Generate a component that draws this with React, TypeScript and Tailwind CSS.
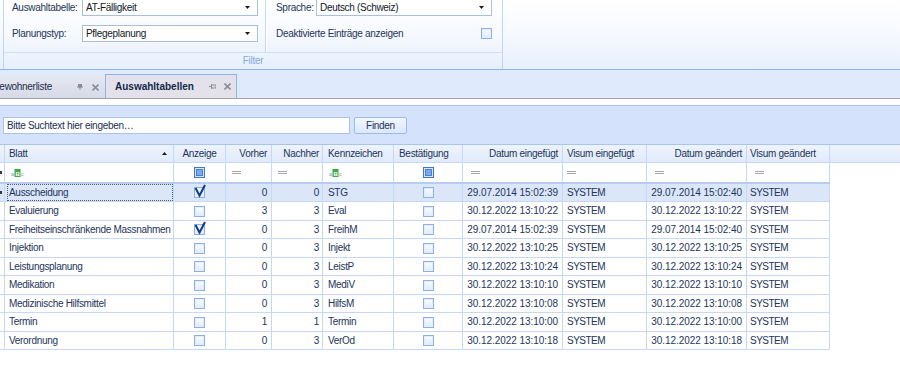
import React from 'react';

type Row = {
  blatt: string;
  anzeige: boolean;
  vorher: number;
  nachher: number;
  kz: string;
  ein: string;
  aen: string;
  h: string;
};

const rows: Row[] = [
  { blatt: 'Ausscheidung', anzeige: true, vorher: 0, nachher: 0, kz: 'STG', ein: '29.07.2014 15:02:39', aen: '29.07.2014 15:02:40', h: 'h-[18px]' },
  { blatt: 'Evaluierung', anzeige: false, vorher: 3, nachher: 3, kz: 'Eval', ein: '30.12.2022 13:10:22', aen: '30.12.2022 13:10:22', h: 'h-[19px]' },
  { blatt: 'Freiheitseinschränkende Massnahmen', anzeige: true, vorher: 0, nachher: 3, kz: 'FreihM', ein: '29.07.2014 15:02:39', aen: '29.07.2014 15:02:40', h: 'h-[18px]' },
  { blatt: 'Injektion', anzeige: false, vorher: 0, nachher: 3, kz: 'Injekt', ein: '30.12.2022 13:10:25', aen: '30.12.2022 13:10:25', h: 'h-[19px]' },
  { blatt: 'Leistungsplanung', anzeige: false, vorher: 0, nachher: 3, kz: 'LeistP', ein: '30.12.2022 13:10:24', aen: '30.12.2022 13:10:24', h: 'h-[18px]' },
  { blatt: 'Medikation', anzeige: false, vorher: 0, nachher: 3, kz: 'MediV', ein: '30.12.2022 13:10:10', aen: '30.12.2022 13:10:10', h: 'h-[19px]' },
  { blatt: 'Medizinische Hilfsmittel', anzeige: false, vorher: 0, nachher: 3, kz: 'HilfsM', ein: '30.12.2022 13:10:08', aen: '30.12.2022 13:10:08', h: 'h-[18px]' },
  { blatt: 'Termin', anzeige: false, vorher: 1, nachher: 1, kz: 'Termin', ein: '30.12.2022 13:10:00', aen: '30.12.2022 13:10:00', h: 'h-[19px]' },
  { blatt: 'Verordnung', anzeige: false, vorher: 0, nachher: 3, kz: 'VerOd', ein: '30.12.2022 13:10:18', aen: '30.12.2022 13:10:18', h: 'h-[18px]' },
];

const cell = 'flex h-full items-center overflow-hidden whitespace-nowrap border-r border-[#c5d8f5]';

const Arrow = () => (
  <svg width="5" height="3" viewBox="0 0 5 3">
    <path d="M0 0H5L2.5 3Z" fill="#1a1a1a" />
  </svg>
);

const Combo = ({ value }: { value: string }) => (
  <div className="flex h-[17px] w-[176px] items-center border border-[#a9bfdd] bg-white pl-[3px] pr-[7px]">
    <span className="flex-1 text-[#121a26]">{value}</span>
    <Arrow />
  </div>
);

const Check = ({ checked = false }: { checked?: boolean }) => (
  <div className="relative h-[11px] w-[11px] border border-[#8eb0e7] bg-white">
    <div className="h-full w-full border border-[#e3edfc] bg-gradient-to-b from-[#f7faff] to-[#e4edfb]" />
    {checked && (
      <svg className="absolute -left-px -top-[3px] overflow-visible" width="12" height="12" viewBox="0 0 12 12">
        <path d="M1.5 3 L5.5 10.5 L11 0" fill="none" stroke="#163a8c" strokeWidth="2" />
      </svg>
    )}
  </div>
);

const FilterCheck = () => (
  <div className="h-[11px] w-[11px] border border-[#3f76d0] bg-[#d8e6fc] p-px">
    <div className="h-full w-full border border-[#4a80d6] bg-[#7ea8e8]" />
  </div>
);

const AbcIcon = () => (
  <svg width="14" height="8" viewBox="0 0 14 8">
    <text x="0" y="7" fontSize="5.5" fill="#8a9a8e" fontFamily="Liberation Sans, sans-serif">a</text>
    <rect x="3.5" y="0" width="6" height="8" fill="#3daa48" />
    <text x="4.4" y="6.6" fontSize="6" fill="#ffffff" fontWeight="bold" fontFamily="Liberation Sans, sans-serif">B</text>
    <text x="10" y="7" fontSize="5.5" fill="#8a9a8e" fontFamily="Liberation Sans, sans-serif">c</text>
  </svg>
);

const EqIcon = () => (
  <div className="flex flex-col gap-px">
    <div className="h-px w-[9px] bg-[#a8a8a8]" />
    <div className="h-px w-[9px] bg-[#a8a8a8]" />
  </div>
);

const PinV = () => (
  <svg width="6" height="6" viewBox="0 0 6 6">
    <path d="M1.5 0H4.5V3H1.5Z M0 3H6 M3 3V6" fill="#8b8d9c" stroke="#8b8d9c" strokeWidth="1" />
  </svg>
);

const PinH = () => (
  <svg width="7" height="5" viewBox="0 0 7 5">
    <path d="M0 2.5H2 M2.5 0V5 M2.5 1H7V4H2.5" fill="none" stroke="#8b8d9c" strokeWidth="1" />
  </svg>
);

const Close = () => (
  <svg width="7" height="7" viewBox="0 0 7 7">
    <path d="M0.5 0.5L6.5 6.5M6.5 0.5L0.5 6.5" stroke="#8b8d9c" strokeWidth="1.6" />
  </svg>
);

const Marker = () => <div className="h-[3px] w-[2px] bg-[#2d3a4d]" />;

export default function App() {
  return (
    <div className="h-[389px] w-[900px] overflow-hidden bg-white font-['Liberation_Sans',Arial,sans-serif] text-[10px] leading-none tracking-[-0.3px] text-[#1d3559]">
      {/* ribbon */}
      <div className="flex h-[70px] border-b border-[#8fb3ea] bg-gradient-to-b from-white via-[#f6f9fe] to-[#e6effc]">
        <div className="ml-[3px] flex w-[500px] flex-col border-x border-[#c3d6f1]">
          <div className="flex h-[53px] border-b border-[#d2e0f5]">
            <div className="-mt-px flex w-[262px] flex-col gap-[9px] border-r border-[#c6d8f2] pl-[8px]">
              <div className="flex items-center">
                <span className="w-[70px]">Auswahltabelle:</span>
                <Combo value="AT-Fälligkeit" />
              </div>
              <div className="flex items-center">
                <span className="w-[70px]">Planungstyp:</span>
                <Combo value="Pflegeplanung" />
              </div>
            </div>
            <div className="-mt-px flex flex-col gap-[9px] border-l border-white pl-[9px]">
              <div className="flex items-center">
                <span className="w-[40px]">Sprache:</span>
                <Combo value="Deutsch (Schweiz)" />
              </div>
              <div className="flex h-[17px] w-[216px] items-center justify-between">
                <span>Deaktivierte Einträge anzeigen</span>
                <Check />
              </div>
            </div>
          </div>
          <div className="flex flex-1 items-center justify-center text-[#86a8dc]">Filter</div>
        </div>
      </div>

      {/* tabs */}
      <div className="flex h-[29px] items-end border-b border-[#a2a2a6] bg-[#dfeafd]">
        <div className="-ml-[15px] flex h-[22px] w-[120px] items-center bg-gradient-to-b from-[#e6e8f1] to-[#d6dae8] pl-[8px] pr-[6px] text-[#1c2c4a]">
          <span>Bewohnerliste</span>
          <div className="ml-auto flex items-center gap-[9px]">
            <PinV />
            <Close />
          </div>
        </div>
        <div className="flex h-[24px] w-[132px] items-center border-x border-t border-[#91b3e8] bg-[#e3e2eb] pl-[9px] pr-[5px] font-bold tracking-normal text-[#14284b]">
          <span>Auswahltabellen</span>
          <div className="ml-auto flex items-center gap-[8px]">
            <PinH />
            <Close />
          </div>
        </div>
      </div>

      <div className="h-[6px] bg-white" />

      {/* search */}
      <div className="flex h-[40px] items-start gap-[4px] border-y border-[#a8c4ef] bg-[#d4e3fb] pl-[3px] pt-[11px]">
        <div className="flex h-[17px] w-[347px] items-center border border-[#a9c3ea] bg-white pl-[3px] text-[#1a2f55]">
          Bitte Suchtext hier eingeben…
        </div>
        <div className="flex h-[17px] w-[53px] items-center justify-center rounded-[2px] border border-[#9dbbe8] bg-gradient-to-b from-[#f2f7fe] to-[#dbe7fa]">
          Finden
        </div>
      </div>

      {/* grid header */}
      <div className="flex h-[18px] border-b border-[#c5d8f5] bg-gradient-to-b from-[#eef4fd] to-[#e0eafb]">
        <div className={`${cell} w-[5px]`} />
        <div className={`${cell} w-[169px] justify-between pl-[4px] pr-[6px]`}>
          <span>Blatt</span>
          <svg width="5" height="3" viewBox="0 0 5 3">
            <path d="M0 3H5L2.5 0Z" fill="#1a1a1a" />
          </svg>
        </div>
        <div className={`${cell} w-[52px] justify-center`}>Anzeige</div>
        <div className={`${cell} w-[46px] justify-end pr-[4px]`}>Vorher</div>
        <div className={`${cell} w-[51px] justify-end pr-[3px]`}>Nachher</div>
        <div className={`${cell} w-[71px] pl-[5px]`}>Kennzeichen</div>
        <div className={`${cell} w-[69px] pl-[5px]`}>Bestätigung</div>
        <div className={`${cell} w-[100px] justify-end pr-[4px]`}>Datum eingefügt</div>
        <div className={`${cell} w-[84px] pl-[4px]`}>Visum eingefügt</div>
        <div className={`${cell} w-[100px] justify-end pr-[4px]`}>Datum geändert</div>
        <div className={`${cell} w-[83px] pl-[3px]`}>Visum geändert</div>
      </div>

      {/* filter row */}
      <div className="flex h-[19px] bg-white">
        <div className={`${cell} w-[5px]`}>
          <Marker />
        </div>
        <div className={`${cell} w-[169px] pl-[6px]`}>
          <AbcIcon />
        </div>
        <div className={`${cell} w-[52px] justify-center`}>
          <FilterCheck />
        </div>
        <div className={`${cell} w-[46px] pl-[6px]`}>
          <EqIcon />
        </div>
        <div className={`${cell} w-[51px] pl-[6px]`}>
          <EqIcon />
        </div>
        <div className={`${cell} w-[71px] pl-[6px]`}>
          <AbcIcon />
        </div>
        <div className={`${cell} w-[69px] justify-center`}>
          <FilterCheck />
        </div>
        <div className={`${cell} w-[100px] pl-[8px]`}>
          <EqIcon />
        </div>
        <div className={`${cell} w-[84px] pl-[4px]`}>
          <EqIcon />
        </div>
        <div className={`${cell} w-[100px] pl-[8px]`}>
          <EqIcon />
        </div>
        <div className={`${cell} w-[83px] pl-[8px]`}>
          <EqIcon />
        </div>
      </div>
      <div className="h-[2px] w-[830px] bg-[#b6cdf1]" />

      {/* data rows */}
      {rows.map((r, i) => {
        const sel = i === 0;
        return (
          <div
            key={r.blatt}
            className={`flex w-[830px] border-b border-[#c5d8f5] ${r.h} ${sel ? 'bg-[#dbe6f9]' : 'bg-white'}`}
          >
            <div className={`${cell} w-[5px]`}>{sel && <Marker />}</div>
            <div className={`${cell} w-[169px] pl-[2px]`}>
              <div
                className={`flex h-full w-full items-center pl-[2px] ${
                  sel ? 'outline-1 -outline-offset-1 outline-dotted outline-[#4d5d75]' : ''
                }`}
              >
                {r.blatt}
              </div>
            </div>
            <div className={`${cell} w-[52px] justify-center`}>
              <Check checked={r.anzeige} />
            </div>
            <div className={`${cell} w-[46px] justify-end pr-[4px]`}>{r.vorher}</div>
            <div className={`${cell} w-[51px] justify-end pr-[3px]`}>{r.nachher}</div>
            <div className={`${cell} w-[71px] pl-[5px]`}>{r.kz}</div>
            <div className={`${cell} w-[69px] justify-center`}>
              <Check />
            </div>
            <div className={`${cell} w-[100px] justify-end pr-[4px] tracking-[-0.05px]`}>{r.ein}</div>
            <div className={`${cell} w-[84px] pl-[4px] tracking-[-0.5px]`}>SYSTEM</div>
            <div className={`${cell} w-[100px] justify-end pr-[4px] tracking-[-0.05px]`}>{r.aen}</div>
            <div className={`${cell} w-[83px] pl-[3px] tracking-[-0.5px]`}>SYSTEM</div>
          </div>
        );
      })}
    </div>
  );
}
